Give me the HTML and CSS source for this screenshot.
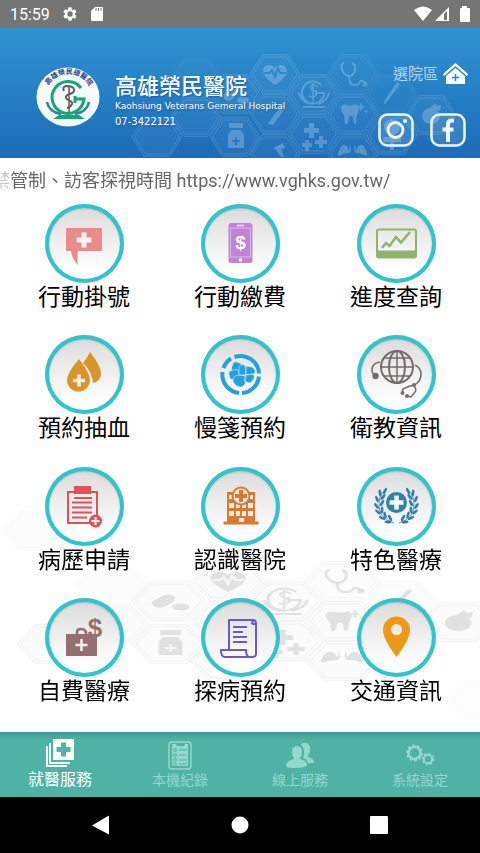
FILE: index.html
```html
<!DOCTYPE html>
<html lang="zh-Hant">
<head>
<meta charset="utf-8">
<meta name="viewport" content="width=device-width, initial-scale=1">
<title>高雄榮民醫院</title>
<link rel="stylesheet" href="styles.css">
</head>
<body>
<div class="status">
  <span class="clock">15:59</span>
  <svg width="16" height="16" viewBox="0 0 24 24" fill="#fff"><path fill-rule="evenodd" d="M19.4 13a7.700 7.700 0 0 0 0-2l2.100-1.600a.5.5 0 0 0 .1-.6l-2-3.500a.5.5 0 0 0-.6-.2l-2.500 1a7.300 7.300 0 0 0-1.700-1l-.4-2.600a.5.5 0 0 0-.5-.5h-4a.5.5 0 0 0-.5.500l-.4 2.600a7.300 7.300 0 0 0-1.700 1l-2.500-1a.5.5 0 0 0-.6.2l-2 3.500a.5.5 0 0 0 .1.600L4.500 11a7.700 7.700 0 0 0 0 2l-2.100 1.600a.5.5 0 0 0-.1.600l2 3.500c.1.2.4.3.6.2l2.500-1a7.300 7.300 0 0 0 1.700 1l.4 2.600c0 .3.2.5.5.500h4c.3 0 .5-.2.500-.5l.4-2.600a7.300 7.300 0 0 0 1.700-1l2.500 1c.2.100.5 0 .6-.2l2-3.500a.5.5 0 0 0-.1-.6zM12 16a4 4 0 1 1 0-8 4 4 0 0 1 0 8z"/></svg>
  <svg width="14" height="16" viewBox="0 0 14 16"><path d="M5 1h7q1 0 1 1v12q0 1-1 1H2q-1 0-1-1V5z" fill="#fff"/><path d="M6 2v3M8.500 2v3M11 2v3" stroke="#757575"/></svg>
  <div class="signals">
    <svg width="18" height="16" viewBox="0 0 18 16"><path d="M0 4Q9-3 18 4L9 15z" fill="#fff"/></svg>
    <svg width="16" height="16" viewBox="0 0 16 16"><path d="M15 1v14H1z" fill="#fff"/><path d="M13 5v9h-3V8z" fill="#757575"/></svg>
    <svg width="16" height="16" viewBox="0 0 16 16"><path d="M6 0h5v2h2q1 0 1 1v12q0 1-1 1H5q-1 0-1-1V3q0-1 1-1h1z" fill="#fff"/></svg>
  </div>
</div>

<header class="hero">
  <svg class="hero-art" viewBox="0 0 480 130" preserveAspectRatio="xMidYMid slice" aria-hidden="true">
    <defs>
      <g id="hex">
        <path d="M-25 0-12.500-19.200h25L25 0 12.500 19.200h-25z" fill="none" stroke="currentColor" stroke-width=".9"/>
        <path d="M-22.500 0-11.500-17h23L22.500 0 11.500 17h-23z" fill="currentColor" fill-opacity=".2" stroke="currentColor" stroke-width=".9"/>
      </g>
      <g id="comb">
        <use href="#hex" x="157" y="109"/><use href="#hex" x="196" y="89"/><use href="#hex" x="196" y="50" opacity=".4"/>
        <use href="#hex" x="235" y="109"/><use href="#hex" x="235" y="66"/><use href="#hex" x="275" y="46"/><use href="#hex" x="275" y="86"/>
        <use href="#hex" x="275" y="126"/><use href="#hex" x="314" y="66"/><use href="#hex" x="314" y="106"/><use href="#hex" x="353" y="46" opacity=".6"/>
        <use href="#hex" x="353" y="86"/><use href="#hex" x="353" y="126"/><use href="#hex" x="392" y="66" opacity=".5"/><use href="#hex" x="392" y="107"/>
        <use href="#hex" x="431" y="87"/>
      </g>
      <g id="motifs" fill="currentColor">
        <path d="M275 57q-12-9-12-14c0-7 9-8 12-3 3-5 12-4 12 3 0 5-5 9-12 14z"/>
        <path d="m264 45h6l2-3 3 7 3-9 2 5h6" fill="none" class="gap"/>
        <g fill="none" stroke="currentColor" stroke-width="2"><path d="M321 57a11 11 0 1 0 3 8h-8m0-3v6M303 79h22M299 65q2 8 11 11M329 65q-2 8-11 11"/><path d="M318 59q-4-4-7-1c-3 5 7 4 5 9q-2 4-7 1M313 55v19" stroke-width="1.500"/>
        <path d="M344 35q-4 1-2 7 3 6 7 6t6-5q1-7-3-8M349 48q0 9 5 9t6-3 5 1"/></g><circle cx="365" cy="56" r="2.500"/>
        <path d="M341 80q1-5 6-3 3 1 6 0 6-2 6 4 0 3-2 6l-1 9q-3 1-3-7-2-3-4 0-1 9-4 7l-1-9q-3-3-3-7z"/><path d="m361 74 1 4 3 1-3 1-1 4-1-4-3-1 3-1zM366 81l.5 2 2 .5-2 .5-.5 2-.5-2-2-.5 2-.5z"/>
        <path d="M309 95h5v5h5v5h-5v5h-5v-5h-5v-5h5zM319 108h4v4h4v4h-4v4h-4v-4h-4v-4h4zM305 112h4v3h3v4h-3v4h-4v-4h-3v-4h3z"/>
        <path d="M229 95h14v5h-14zM231 102h10q1 3 3 4v14h-16v-14q2-1 3-4z"/><path d="M236 109v8M232 113h8" class="gap"/>
        <path d="M226 72a4 4 0 0 1-2-6l8-6q5-2 7 3 0 3-2 5l-6 4q-3 1-5 0z"/><ellipse cx="243" cy="72" rx="6" ry="3.500"/>
        <path d="m268 96 12-17 4 3-11 15z"/>
        <path d="m397 54 3 2-10 14-5 6q-2-1 0-4z"/>
        <path d="m273 120 10-5 2 5-4 1 3 8h-3l-5-7z"/>
        <path d="M350 116q2 8-1 9-6 0-10 3-2-1 0-6 3-6 6-5 3 1 4 6zM355 116q-2 8 1 9 6 0 10 3 2-1 0-6-3-6-6-5-3 1-4 6z"/>
        <circle cx="392" cy="99" r="8"/><path d="M383 109h18v5h-7v8h-4v-8h-7z"/>
        <ellipse cx="431" cy="88" rx="9" ry="8"/><path d="m430 80 5-5 2 3 4-1-1 6z"/>
      </g>
    </defs>
    <g opacity=".24"><use href="#comb"/></g><g opacity=".28"><use href="#motifs"/></g>
  </svg>
  <div class="brand">
    <svg width="64" height="60" viewBox="0 0 64 60" role="img" aria-label="院徽">
      <ellipse cx="32" cy="30" rx="31.500" ry="29.500" fill="#f6faf8"/>
      <path id="crest-arc" d="M10.500 23A23 22 0 0 1 55 24" fill="none"/>
      <text class="crest-text"><textPath href="#crest-arc" startOffset="50%">高雄榮民總醫院</textPath></text>
      <g fill="none" stroke="#16a578"><path d="M45 21a16 16 0 1 0 3 11H38m1-3v7" stroke-width="3"/><path d="M17 52h32l-6-4H23z" fill="#16a578" stroke="none"/>
      <path d="M11 35q2 10 14 12M53 35q-2 10-14 12" stroke-width="2.500" stroke="#2789a0"/></g>
      <path d="M33 20v25" stroke="#b97443" stroke-width="2"/><path d="M28 24q-2-4 2-5 9 0 8 5c-1 4-9 2-8 7 1 3 7 2 6 6q-1 3-5 4" fill="none" stroke="#45627d" stroke-width="2"/>
    </svg>
    <div>
      <h1>高雄榮民醫院</h1>
      <p class="english">Kaohsiung Veterans Gemeral Hospital</p>
      <p class="phone">07-3422121</p>
    </div>
  </div>
  <div class="shortcuts">
    <a class="branch" href="#branch">選院區
      <svg width="25" height="22" viewBox="0 0 25 22"><path d="M12.500 0 25 11l-1 2L12.500 3 1 13l-1-2z" fill="#fff"/><path d="M12.500 5 22 13v8H3v-8z" fill="#fff"/><path d="M12.500 11v7M9 14.500h7" stroke="#297fc3" stroke-width="1.500"/></svg>
    </a>
    <div class="social">
      <a href="#instagram" aria-label="Instagram"><svg width="36" height="34" viewBox="0 0 36 34"><rect x="1.500" y="1.500" width="33" height="31" rx="8" class="social-box"/><circle cx="17.500" cy="17" r="7.500" fill="none" stroke="#eef6fc" stroke-width="3"/><circle cx="27" cy="8" r="2" fill="#eef6fc"/></svg></a>
      <a href="#facebook" aria-label="Facebook"><svg width="36" height="34" viewBox="0 0 36 34"><rect x="1.500" y="1.500" width="33" height="31" rx="8" class="social-box"/><path d="M24 7.500h-2.500q-3.500 0-3.500 3.500v18M12.500 16.500h11" fill="none" stroke="#eef6fc" stroke-width="4"/></svg></a>
    </div>
  </div>
</header>

<div class="notice"><p>禁管制、訪客探視時間 https://www.vghks.gov.tw/</p></div>

<main class="services">
  <svg class="services-art" viewBox="0 0 480 528" preserveAspectRatio="xMidYMax slice" aria-hidden="true">
    <g transform="translate(-177.600 331) scale(1.475 1)"><g opacity=".4"><use href="#comb"/><use href="#hex" x="147" y="-4" opacity=".4"/><use href="#hex" x="450" y="165" opacity=".3"/></g><g opacity=".9"><use href="#motifs"/></g></g>
  </svg>

  <a class="tile" href="#register"><svg class="disc" viewBox="0 0 79 79"><path d="M22 24h34q1 0 1 1v21q0 1-1 1H33q-1 7 0 14-6-6-7-14h-4q-1 0-1-1V25q0-1 1-1z" fill="#e98b8b"/><path d="M39 28.500v15M31.500 36h15" stroke="#f4f4f4" stroke-width="5"/></svg><span>行動掛號</span></a>

  <a class="tile" href="#payment"><svg class="disc" viewBox="0 0 79 79"><rect x="27.500" y="19" width="24" height="40" rx="2.500" fill="#bf83d8"/><rect x="29.500" y="24" width="20" height="29" fill="none" stroke="#dcb9e9"/><path d="M36 21.500h7" stroke="#f4e8f8" stroke-width="1.500"/><circle cx="39.500" cy="56" r="1.700" fill="#fff"/><text x="39.500" y="45" font-size="19" fill="#fff">$</text></svg><span>行動繳費</span></a>

  <a class="tile" href="#progress"><svg class="disc" viewBox="0 0 79 79"><rect x="20" y="25.500" width="39" height="28" rx="2" fill="none" stroke="#91b36f" stroke-width="2"/><path d="M20 46.500h39.500V52q0 2-2 2H22q-2 0-2-2z" fill="#91b36f"/><path d="m25 44 4-5 3.500 3L39 33l5 5.500L53 28" fill="none" stroke="#91b36f" stroke-width="2.500"/></svg><span>進度查詢</span></a>

  <a class="tile" href="#blood"><svg class="disc" viewBox="0 0 79 79"><path d="M45 17q11 14 11 21 0 8-8 10-1-11-10-20 4-5 7-11z" fill="#d9952d"/><path d="M34 24q11 14 11 21a11.500 11.500 0 0 1-23 0q0-7 12-21z" fill="#d9952d"/><path d="M34 39.500v12M28 45.500h12" stroke="#f7eee0" stroke-width="3.500"/></svg><span>預約抽血</span></a>

  <a class="tile" href="#refill"><svg class="disc" viewBox="0 0 79 79"><g fill="none" stroke="#25a0dd" stroke-width="4"><path d="M33.500 22A18.500 18.500 0 0 1 58 38.500M58 41.500A18.500 18.500 0 0 1 41 58M38 58A18.500 18.500 0 0 1 21.500 37M22.500 33A18.500 18.500 0 0 1 30 23.500"/></g><g fill="#25a0dd" stroke="#d9eaf3" stroke-width=".6"><rect x="31" y="27" width="9" height="10" rx="3" transform="rotate(20 35 32)"/><rect x="28" y="35" width="10" height="9" rx="3" transform="rotate(-15 33 39)"/><path d="M38 32q2-4 7-1v9h-7zM44 31l7 1q5 3 2 7l-8 1zM44 40l7-1q4 2 1 6l-3 3-6-2zM32 46q0-6 7-6l6 1-1 8-3 3q-7 0-9-6z"/></g></svg><span>慢箋預約</span></a>

  <a class="tile" href="#education"><svg class="disc" viewBox="0 0 79 79"><g fill="none" stroke="#756b6b" stroke-width="2"><circle cx="40" cy="32" r="16"/><ellipse cx="40" cy="32" rx="8" ry="16"/><path d="M40 16v32M24 32h32M27 23h26M27 41h26" stroke-width="1.500"/><path d="M23 27q-8 1-8 8 0 4 3 5M58 30q6 3 6 9 0 8-7 11-5 1-11 4l-1 4M57 51q3 4 1 6l-4 5-4-1" stroke-width="1.500"/></g><g fill="#756b6b"><circle cx="18.500" cy="41" r="3.200"/><circle cx="57" cy="50" r="2"/><circle cx="45.500" cy="58" r="2"/><circle cx="50" cy="61" r="2"/></g></svg><span>衛教資訊</span></a>

  <a class="tile" href="#records"><svg class="disc" viewBox="0 0 79 79"><path d="M29 25h-6v31h22M46 25h6v23" fill="none" stroke="#e15159" stroke-width="2"/><path d="M29 19h17v8H29z" fill="#e15159"/><path d="M29 31h18M27 35.500h20M27 40.500h20M27 45.500h20M27 50.500h15" stroke="#e15159" stroke-width="2"/><circle cx="50.500" cy="54" r="6.500" fill="#e15159"/><path d="M50.500 50v8M46.500 54h8" stroke="#fff" stroke-width="2"/></svg><span>病歷申請</span></a>

  <a class="tile" href="#about"><svg class="disc" viewBox="0 0 79 79"><path d="M26 25h28v30H26zM22.500 54.500h35v3h-35z" fill="#d77b32"/><path d="M28 28h4v4h-4zM48 28h4v4h-4zM28 36h5v5h-5zM35 36h4v5h-4zM41 36h4v5h-4zM47 36h5v5h-5zM28 44h5v5h-5zM35 44h4v5h-4zM41 44h4v5h-4zM47 44h5v5h-5zM38 51h5v4h-5z" fill="#f1eeeb"/><circle cx="40" cy="29" r="8.500" fill="#f5ece4" stroke="#d77b32" stroke-width="2"/><path d="M40 23v12M34 29h12" stroke="#d77b32" stroke-width="4"/></svg><span>認識醫院</span></a>

  <a class="tile" href="#specialty"><svg class="disc" viewBox="0 0 79 79"><g id="laurel" fill="#2f81a8"><path d="M37 56Q21 51 22 37q0-8 5-13" fill="none" stroke="#2f81a8" stroke-width=".8"/><ellipse cx="28" cy="24" rx="1.400" ry="3.500" transform="rotate(25 28 24)"/><ellipse cx="23" cy="26" rx="1.400" ry="3.500" transform="rotate(-5 23 26)"/><ellipse cx="26" cy="30" rx="1.400" ry="3.500" transform="rotate(40 26 30)"/><ellipse cx="20" cy="32" rx="1.400" ry="3.500" transform="rotate(-20 20 32)"/><ellipse cx="25" cy="36" rx="1.400" ry="3.500" transform="rotate(28 25 36)"/><ellipse cx="19.500" cy="39" rx="1.400" ry="3.500" transform="rotate(-35 19.500 39)"/><ellipse cx="25" cy="43" rx="1.400" ry="3.500" transform="rotate(5 25 43)"/><ellipse cx="21" cy="45" rx="1.400" ry="3.500" transform="rotate(-50 21 45)"/><ellipse cx="28" cy="48" rx="1.400" ry="3.500" transform="rotate(-15 28 48)"/><ellipse cx="25" cy="51" rx="1.400" ry="3.500" transform="rotate(-65 25 51)"/><ellipse cx="33" cy="51" rx="1.400" ry="3.500" transform="rotate(-30 33 51)"/><ellipse cx="31" cy="55" rx="1.400" ry="3.500" transform="rotate(-80 31 55)"/></g><use href="#laurel" transform="matrix(-1 0 0 1 79 0)"/><circle cx="39.500" cy="35.500" r="10.500" fill="#2f81a8"/><path d="M39.500 28.500v14M32.500 35.500h14" stroke="#f4f8fa" stroke-width="4.500"/></svg><span>特色醫療</span></a>

  <a class="tile" href="#selfpay"><svg class="disc" viewBox="0 0 79 79"><path d="M21 36h31v22H21z" fill="#966f70"/><path d="M32 36v-2q0-3 4-3t5 3v2" fill="none" stroke="#966f70" stroke-width="2.500"/><path d="M36.500 41v12M30.500 47h12" stroke="#f6efef" stroke-width="2.500"/><text x="50" y="39" font-size="26" fill="#966f70">$</text></svg><span>自費醫療</span></a>

  <a class="tile" href="#visit"><svg class="disc" viewBox="0 0 79 79"><g fill="none" stroke="#6c59c2" stroke-width="2"><path d="M28 52V22h25q-2 1-2 4M28 52h-8q0 7 4 7h25q-4 0-4-7H28M51 26h4v30q0 3-4 3h-2M55 26q0-4-3-4"/><path d="M32 29h14M32 34h10M32 39h14M32 44h14"/></g></svg><span>探病預約</span></a>

  <a class="tile" href="#traffic"><svg class="disc" viewBox="0 0 79 79"><path fill-rule="evenodd" d="M39.500 59Q26 41 26 32a13.500 13.500 0 0 1 27 0q0 9-13.500 27zM39.500 26a5.500 5.500 0 1 0 0 11 5.500 5.500 0 0 0 0-11z" fill="#ed9915"/></svg><span>交通資訊</span></a>
</main>

<nav class="tabs">
  <a class="tab current" href="#services"><svg width="30" height="30" viewBox="0 0 30 30"><path d="M8 1h21v21H8z" fill="#fff"/><path d="M5 5v20h20M2 8v20h20" fill="none" stroke="#fff" stroke-width="2"/><path d="M18.500 4.500v14M11.500 11.500h14" stroke="#4fb2a5" stroke-width="5"/></svg><span>就醫服務</span></a>
  <a class="tab" href="#history"><svg width="30" height="30" viewBox="0 0 30 30"><rect x="4" y="2" width="22" height="27" rx="3" fill="none" stroke="#94d8cb" stroke-width="1.500"/><path d="M7 4h4l1 2h7l1-2h3v22H7z" fill="#94d8cb"/><path d="M14 10h8M14 15h8M14 20h8M14 24h8" stroke="#4fb2a5"/><g fill="none" stroke="#4fb2a5"><circle cx="10" cy="10" r="1.500"/><circle cx="10" cy="15" r="1.500"/><circle cx="10" cy="20" r="1.500"/><circle cx="10" cy="24.500" r="1.500"/></g></svg><span>本機紀錄</span></a>
  <a class="tab" href="#online"><svg width="30" height="30" viewBox="0 0 30 30"><path d="M16 5q2-3 5-2 5 1 4 7 0 4-2 5v2q6 1 6 6h-6q-1-4-5-5 2-4 1-8-1-4-3-5z" fill="#94d8cb"/><path d="M12 6q5 0 5 6 0 4-2 6v1q7 2 7 6-2 3-11 3T1 26q0-5 8-7v-1q-2-2-2-6 0-6 5-6z" fill="#94d8cb"/></svg><span>線上服務</span></a>
  <a class="tab" href="#settings"><svg width="30" height="30" viewBox="0 0 30 30"><g fill="none" stroke="#94d8cb"><circle cx="9.500" cy="13" r="6" stroke-width="2.500"/><circle cx="9.500" cy="13" r="7.500" stroke-width="2" stroke-dasharray="2.400 2.312"/><circle cx="23" cy="19" r="4.200" stroke-width="2"/><circle cx="23" cy="19" r="5.700" stroke-width="1.500" stroke-dasharray="1.900 2.577"/></g></svg><span>系統設定</span></a>
</nav>

<div class="system">
  <button aria-label="返回"><svg width="20" height="20" viewBox="0 0 20 20"><path d="M17 1q1-1 1 1v17q0 1-1 0L1 10.500z" fill="#fff"/></svg></button>
  <button aria-label="主畫面"><svg width="20" height="20" viewBox="0 0 20 20"><circle cx="10" cy="10" r="8.500" fill="#fff"/></svg></button>
  <button aria-label="最近使用"><svg width="20" height="20" viewBox="0 0 20 20"><rect x="1" y="1" width="18" height="18" rx="1" fill="#fff"/></svg></button>
</div>
</body>
</html>
```
FILE: styles.css
```css
* { box-sizing: border-box; }

body {
  margin: 0;
  min-height: 100vh;
  display: flex;
  flex-direction: column;
  background: #fefefe;
  font-family: Roboto, "Noto Sans CJK TC", sans-serif;
}

a { color: inherit; text-decoration: none; }
h1, p { margin: 0; }
svg { display: block; flex: none; }

.status {
  display: flex;
  align-items: center;
  gap: 12px;
  height: 28px;
  padding: 0 8px 0 10px;
  background: #757575;
  color: #fff;
}
.clock { font-size: 16px; }
.signals { display: flex; gap: 2px; margin-left: auto; }
.signals svg:last-child { margin-left: 4px; }

.hero {
  position: relative;
  display: flex;
  justify-content: space-between;
  height: 130px;
  padding: 34px 12px 0 36px;
  background: linear-gradient(#3093d1, #1c6bb8);
  color: #fff;
}
.hero-art {
  --gap: #2a80c4;
  position: absolute;
  inset: 0;
  width: 100%;
  height: 100%;
  color: #cfe6f7;
}
.gap { stroke: var(--gap); stroke-width: 2; }
.brand, .shortcuts { position: relative; }
.brand {
  display: flex;
  align-items: flex-start;
  gap: 15px;
  padding-top: 5px;
  text-shadow: 1px 1px 2px #1b5c9c;
}
.brand h1 {
  margin-top: 8px;
  font-size: 22px;
  line-height: 24px;
  font-weight: 500;
}
.english, .phone { font-family: "DejaVu Sans", sans-serif; line-height: 15px; white-space: nowrap; }
.english { font-size: 9px; }
.phone { font-size: 10px; }
.crest-text { font-size: 7px; font-weight: 700; fill: #2a4480; text-shadow: none; text-anchor: middle; }

.shortcuts { display: flex; flex-direction: column; align-items: flex-end; gap: 27px; }
.branch { display: flex; align-items: center; gap: 5px; color: #b2d5ee; font-size: 15px; line-height: 24px; }
.social { display: flex; gap: 16px; padding-right: 2px; }
.social-box { fill: #ffffff1a; stroke: #eef6fc; stroke-width: 2.5px; }

.notice {
  height: 46px;
  overflow: hidden;
  color: #666;
  font-size: 18px;
  line-height: 46px;
  white-space: nowrap;
  mask-image: linear-gradient(90deg, #0004, #0006 8px, #000 12px);
}
.notice p { margin-left: -8px; }

.services {
  position: relative;
  flex: 1;
  display: grid;
  grid-template-columns: repeat(3, 1fr);
  grid-auto-rows: 1fr;
  padding: 0 6px 3px;
}
.services-art {
  --gap: #f6f6f6;
  position: absolute;
  inset: 0;
  width: 100%;
  height: 100%;
  color: #dedede;
}
.tile {
  position: relative;
  display: flex;
  flex-direction: column;
  align-items: center;
  gap: 1px;
  color: #000;
  font-size: 23px;
  line-height: 28px;
}
.disc {
  width: 79px;
  height: 79px;
  border-radius: 50%;
  background: linear-gradient(#dadada, #fff 85%);
  box-shadow: inset 0 0 0 4px #30c4cd, inset 0 1px 2px 4px #8885;
}
.disc text { font-family: "Liberation Sans", sans-serif; font-weight: 700; text-anchor: middle; }

.tabs {
  display: grid;
  grid-template-columns: repeat(4, 1fr);
  height: 65px;
  background: linear-gradient(#3f9d91, #4fb2a5 8px);
}
.tab {
  display: flex;
  flex-direction: column;
  align-items: center;
  padding-top: 8px;
  color: #94d8cb;
  font-size: 14px;
  line-height: 20px;
}
.tab.current { padding-top: 6px; color: #fff; font-size: 16px; line-height: 24px; }

.system {
  display: flex;
  justify-content: center;
  align-items: center;
  gap: 119px;
  height: 56px;
  background: #000;
}
.system button { padding: 0; border: 0; background: none; }
```
